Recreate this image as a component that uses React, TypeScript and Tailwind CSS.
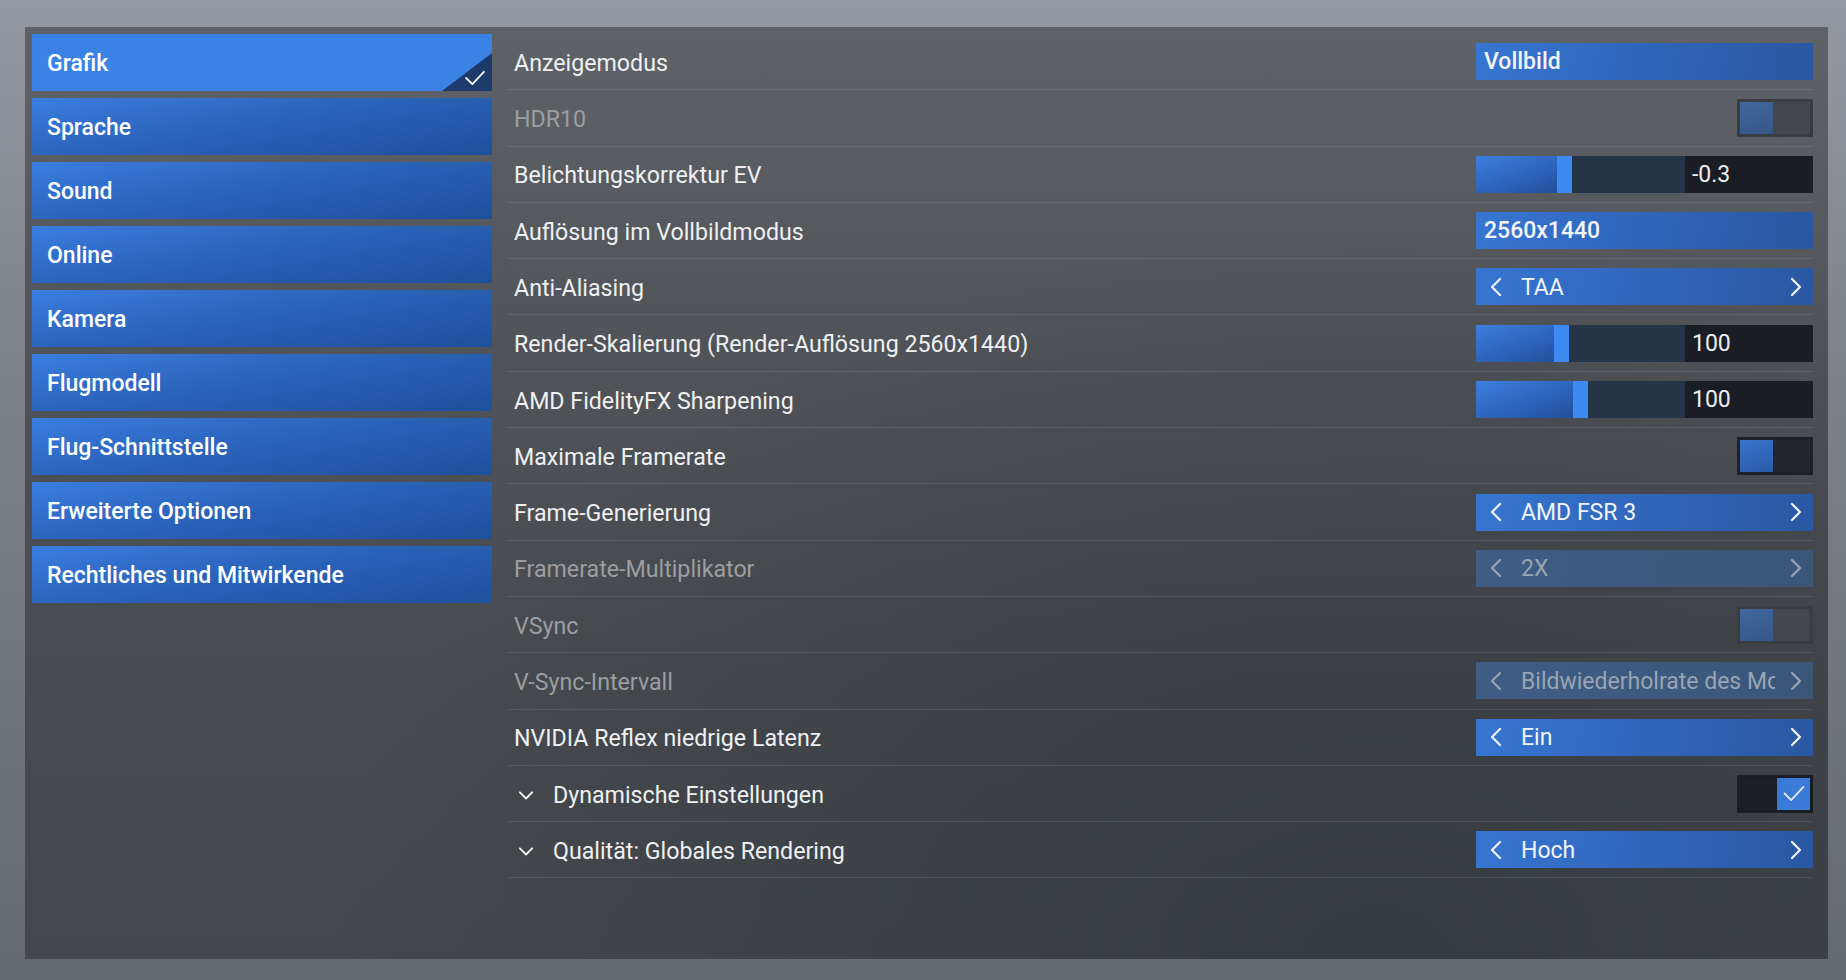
import * as React from 'react';

type Control =
  | { kind: 'select'; value: string }
  | { kind: 'arrows'; value: string; disabled?: boolean }
  | { kind: 'slider'; pos: number; value: string }
  | { kind: 'toggle'; on: boolean; disabled?: boolean };

type Row = {
  label: string;
  disabled?: boolean;
  group?: boolean;
  control: Control;
};

const menu = [
  'Grafik',
  'Sprache',
  'Sound',
  'Online',
  'Kamera',
  'Flugmodell',
  'Flug-Schnittstelle',
  'Erweiterte Optionen',
  'Rechtliches und Mitwirkende'
];

const rows: Row[] = [
  { label: 'Anzeigemodus', control: { kind: 'select', value: 'Vollbild' } },
  { label: 'HDR10', disabled: true, control: { kind: 'toggle', on: false, disabled: true } },
  { label: 'Belichtungskorrektur EV', control: { kind: 'slider', pos: 81, value: '-0.3' } },
  { label: 'Auflösung im Vollbildmodus', control: { kind: 'select', value: '2560x1440' } },
  { label: 'Anti-Aliasing', control: { kind: 'arrows', value: 'TAA' } },
  {
    label: 'Render-Skalierung (Render-Auflösung 2560x1440)',
    control: { kind: 'slider', pos: 78, value: '100' }
  },
  { label: 'AMD FidelityFX Sharpening', control: { kind: 'slider', pos: 97, value: '100' } },
  { label: 'Maximale Framerate', control: { kind: 'toggle', on: false } },
  { label: 'Frame-Generierung', control: { kind: 'arrows', value: 'AMD FSR 3' } },
  {
    label: 'Framerate-Multiplikator',
    disabled: true,
    control: { kind: 'arrows', value: '2X', disabled: true }
  },
  { label: 'VSync', disabled: true, control: { kind: 'toggle', on: false, disabled: true } },
  {
    label: 'V-Sync-Intervall',
    disabled: true,
    control: { kind: 'arrows', value: 'Bildwiederholrate des Monitors', disabled: true }
  },
  { label: 'NVIDIA Reflex niedrige Latenz', control: { kind: 'arrows', value: 'Ein' } },
  { label: 'Dynamische Einstellungen', group: true, control: { kind: 'toggle', on: true } },
  { label: 'Qualität: Globales Rendering', group: true, control: { kind: 'arrows', value: 'Hoch' } }
];

function Chevron({ dir, className }: { dir: 'left' | 'right' | 'down'; className?: string }) {
  const points =
    dir === 'left' ? '10,2 2,10 10,18' : dir === 'right' ? '2,2 10,10 2,18' : '2,5 9,12 16,5';
  const box = dir === 'down' ? '0 0 18 16' : '0 0 12 20';
  return (
    <svg viewBox={box} className={className} fill="none" stroke="currentColor" strokeWidth={2.2}>
      <polyline points={points} strokeLinecap="round" strokeLinejoin="round" />
    </svg>
  );
}

function Tick({ className }: { className?: string }) {
  return (
    <svg viewBox="0 0 24 18" className={className} fill="none" stroke="currentColor" strokeWidth={2}>
      <polyline points="2,9 9,16 22,2" strokeLinecap="round" strokeLinejoin="round" />
    </svg>
  );
}

function ControlView({ control }: { control: Control }) {
  if (control.kind === 'select') {
    return (
      <div className="flex h-[37px] w-[337px] items-center bg-[linear-gradient(100deg,#3676d2_0%,#2e62b3_60%,#2a58a2_100%)] pt-[2px] pl-2 text-[23px] font-medium text-[#f2f4f7]">
        {control.value}
      </div>
    );
  }
  if (control.kind === 'arrows') {
    const d = control.disabled;
    return (
      <div
        className={
          d
            ? 'flex h-[37px] w-[337px] items-center bg-[linear-gradient(100deg,#3f5d85_0%,#3b5679_100%)] text-[#9aa4b2]'
            : 'flex h-[37px] w-[337px] items-center bg-[linear-gradient(100deg,#3676d2_0%,#2f63b5_60%,#2a58a2_100%)] text-[#f2f4f7]'
        }
      >
        <Chevron dir="left" className="ml-[14px] h-[20px] w-[12px] shrink-0" />
        <div className="ml-[19px] min-w-0 flex-1 overflow-hidden pt-[2px] whitespace-nowrap text-[23px]">
          {control.value}
        </div>
        <Chevron dir="right" className="mr-[11px] ml-[15px] h-[20px] w-[12px] shrink-0" />
      </div>
    );
  }
  if (control.kind === 'slider') {
    return (
      <div className="flex h-[37px] w-[337px]">
        <div className="flex w-[209px] bg-[#263447]">
          <div
            className="bg-[linear-gradient(160deg,#3b7fe0_0%,#2c62b8_60%,#22509a_100%)]"
            style={{ width: control.pos }}
          />
          <div className="w-[15px] bg-[#3d8af3]" />
        </div>
        <div className="flex flex-1 items-center bg-[#1a1d24] pt-[2px] pl-[7px] text-[23px] text-[#eceef1]">
          {control.value}
        </div>
      </div>
    );
  }
  const { on, disabled } = control;
  if (on) {
    return (
      <div className="flex h-[38px] w-[76px] border-[3px] border-[#1a1d23] bg-[#1c1f25]">
        <div className="flex-1" />
        <div className="flex w-[33px] items-center justify-center bg-[#3a7bd9] text-[#dfe8f5]">
          <Tick className="h-[17px] w-[24px]" />
        </div>
      </div>
    );
  }
  return (
    <div
      className={
        disabled
          ? 'flex h-[38px] w-[76px] border-[3px] border-[#393c41] bg-[#44474c]'
          : 'flex h-[38px] w-[76px] border-[3px] border-[#1e2127] bg-[#23262c]'
      }
    >
      <div
        className={
          disabled
            ? 'w-[33px] bg-[linear-gradient(160deg,#41679c_0%,#35578a_100%)]'
            : 'w-[33px] bg-[linear-gradient(160deg,#3a74cc_0%,#2a5aa6_100%)]'
        }
      />
    </div>
  );
}

function SettingRow({ row }: { row: Row }) {
  return (
    <div className="flex h-[56.3px] items-center border-b border-[#ffffff17]">
      <div
        className={
          row.disabled
            ? 'flex flex-1 items-center pt-[3px] pl-[7px] text-[23.2px] text-[#9c9ea1]'
            : 'flex flex-1 items-center pt-[3px] pl-[7px] text-[23.2px] text-[#eef0f2]'
        }
      >
        {row.group && <Chevron dir="down" className="mr-[19px] ml-[4px] h-[14px] w-[16px]" />}
        <span>{row.label}</span>
      </div>
      <ControlView control={row.control} />
    </div>
  );
}

function MenuButton({ label, active }: { label: string; active: boolean }) {
  return (
    <div
      className={
        active
          ? 'relative flex h-[57px] items-center bg-[#3a82e4] pt-[3px] pl-[15px] text-[23px] font-medium text-white'
          : 'relative flex h-[57px] items-center bg-[linear-gradient(170deg,#3a7ee0_0%,#2b63bb_45%,#1f4f9c_100%)] pt-[3px] pl-[15px] text-[23px] font-medium text-white'
      }
    >
      {label}
      {active && (
        <div className="absolute right-0 bottom-0 h-[38px] w-[50px] bg-[#1c3a6a] [clip-path:polygon(100%_0,100%_100%,0_100%)]">
          <Tick className="absolute right-[6px] bottom-[5px] h-[16px] w-[22px] text-white" />
        </div>
      )}
    </div>
  );
}

export default function App() {
  return (
    <div className="h-[980px] w-[1846px] overflow-hidden bg-[linear-gradient(180deg,#9498a0_0%,#7c8188_40%,#656a70_100%)] pt-[27px] pl-[25px] font-[Roboto,sans-serif]">
      <div className="flex h-[932px] w-[1803px] bg-[radial-gradient(ellipse_at_75%_100%,#363b40_0%,transparent_55%),linear-gradient(180deg,#5f6267_0%,#505357_35%,#474a4e_70%,#44484c_100%)]">
        <div className="flex w-[467px] flex-col gap-[7px] pt-[7px] pl-[7px]">
          {menu.map((m, i) => (
            <MenuButton key={m} label={m} active={i === 0} />
          ))}
        </div>
        <div className="flex w-[1321px] flex-col pt-[7px] pl-[15px]">
          {rows.map((r) => (
            <SettingRow key={r.label} row={r} />
          ))}
        </div>
      </div>
    </div>
  );
}
